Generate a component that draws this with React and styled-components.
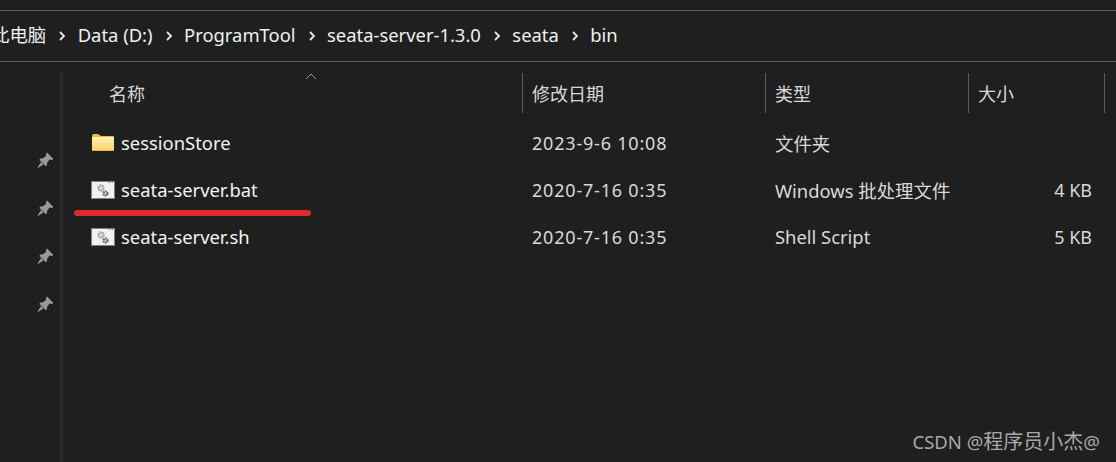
import React from "react";
import styled, { createGlobalStyle } from "styled-components";

const FONT = `"Noto Sans", "Noto Sans CJK SC", sans-serif`;

const GlobalStyle = createGlobalStyle`
	html, body {
		margin: 0;
		padding: 0;
		background: #1f1f1f;
	}
`;

const crumbs = ["此电脑", "Data (D:)", "ProgramTool", "seata-server-1.3.0", "seata", "bin"];

const files = [
	{ name: "sessionStore", icon: "folder", date: "2023-9-6 10:08", type: "文件夹", size: "" },
	{ name: "seata-server.bat", icon: "script", date: "2020-7-16 0:35", type: "Windows 批处理文件", size: "4 KB" },
	{ name: "seata-server.sh", icon: "script", date: "2020-7-16 0:35", type: "Shell Script", size: "5 KB" },
];

const pins = [0, 1, 2, 3];

const FolderIcon = () => (
	<FolderSvg width="22" height="17" viewBox="0 0 22 17">
		<defs>
			<linearGradient id="folderFill" x1="0" y1="0" x2="0" y2="1">
				<stop offset="0" stopColor="#fff0b8" />
				<stop offset="1" stopColor="#fbd568" />
			</linearGradient>
		</defs>
		<path d="M0 2 Q0 0 2 0 H6 L9 2 H0 Z" fill="#eeb73f" />
		<rect x="0" y="2" width="22" height="15" rx="1" fill="#eeb73f" />
		<rect x="0" y="3" width="22" height="13" fill="url(#folderFill)" />
	</FolderSvg>
);

const ScriptIcon = () => (
	<svg width="24" height="18" viewBox="0 0 24 18">
		<rect x="0.500" y="0.500" width="23" height="17" fill="#f2f2f2" stroke="#808080" />
		<rect x="17" y="1" width="6" height="1" fill="#8a8a8a" />
		<rect x="18" y="1" width="1" height="1" fill="#f2f2f2" />
		<rect x="20" y="1" width="1" height="1" fill="#f2f2f2" />
		<rect x="22" y="1" width="1" height="1" fill="#f2f2f2" />
		<circle cx="10" cy="7" r="2.400" fill="none" stroke="#a4a4a4" strokeWidth="2.600" strokeDasharray="1.700 0.500" />
		<circle cx="14.500" cy="12.500" r="2" fill="none" stroke="#666666" strokeWidth="2.200" strokeDasharray="1.500 0.500" />
	</svg>
);

const PinIcon = () => (
	<svg width="17" height="17" viewBox="0 0 17 17">
		<path d="M10 0.500 L16.500 7 L14.500 8 L12.500 7.500 L10 11 L10 13.500 L8.500 14 L2.500 8 L3 6.500 L5.500 6.500 L9 4 L9 2 Z" fill="#939aa2" />
		<path d="M4 10 L0 16.500 L6.500 12.500 Z" fill="#939aa2" />
	</svg>
);

export default function App() {
	return (
		<>
			<GlobalStyle />
			<Window>
				<TopStrip />
				<AddressBar>
					{crumbs.map((crumb, i) => (
						<React.Fragment key={crumb}>
							{i > 0 && (
								<Chevron viewBox="0 0 8 12">
									<path d="M2 2 L6 6 L2 10" />
								</Chevron>
							)}
							<Crumb>{crumb}</Crumb>
						</React.Fragment>
					))}
				</AddressBar>
				<Body>
					<PinPane>
						{pins.map(pin => (
							<PinIcon key={pin} />
						))}
					</PinPane>
					<Splitter />
					<ListPane>
						<HeaderRow>
							<HeaderCell $first>
								名称
								<SortCaret viewBox="0 0 12 7">
									<path d="M1 6 L6 1 L11 6" />
								</SortCaret>
							</HeaderCell>
							<HeaderCell>修改日期</HeaderCell>
							<HeaderCell>类型</HeaderCell>
							<HeaderCell>大小</HeaderCell>
						</HeaderRow>
						{files.map(file => (
							<FileRow key={file.name}>
								<NameCell>
									<IconSlot>{file.icon === "folder" ? <FolderIcon /> : <ScriptIcon />}</IconSlot>
									{file.name}
								</NameCell>
								<DateCell>{file.date}</DateCell>
								<Cell>{file.type}</Cell>
								<SizeCell>{file.size}</SizeCell>
							</FileRow>
						))}
						<RedMark />
					</ListPane>
				</Body>
				<Watermark>
					CSDN @<WatermarkCjk>程序员小杰</WatermarkCjk>@
				</Watermark>
			</Window>
		</>
	);
}

const Window = styled.div`
	position: relative;
	width: 1116px;
	height: 462px;
	overflow: hidden;
	background: #1f1f1f;
	color: #e6e6e6;
	font-family: ${FONT};
	font-size: 18.4px;
	display: flex;
	flex-direction: column;
`;

const TopStrip = styled.div`
	height: 10px;
	flex: none;
`;

const AddressBar = styled.div`
	height: 50px;
	flex: none;
	display: flex;
	align-items: center;
	border-top: 1px solid #5c5c5c;
	border-bottom: 1px solid #5c5c5c;
	margin-left: -9px;
	color: #f0f0f0;
`;

const Crumb = styled.span`
	white-space: nowrap;
	margin-top: -4px;
`;

const Chevron = styled.svg`
	width: 8px;
	height: 12px;
	margin: 0 11.500px 0 12px;
	flex: none;

	path {
		fill: none;
		stroke: #e6e6e6;
		stroke-width: 1.800;
	}
`;

const Body = styled.div`
	flex: 1;
	display: flex;
	padding-top: 11px;
	min-height: 0;
`;

const PinPane = styled.div`
	width: 60px;
	flex: none;
	box-sizing: border-box;
	padding: 79px 0 0 37px;
	display: flex;
	flex-direction: column;
	gap: 31px;
`;

const Splitter = styled.div`
	width: 3px;
	flex: none;
	background: #2b2b2b;
`;

const ListPane = styled.div`
	position: relative;
	flex: 1;
`;

const COLUMNS = "460px 243px 203px 136px";

const HeaderRow = styled.div`
	display: grid;
	grid-template-columns: ${COLUMNS};
	height: 40px;
	margin-bottom: 6px;
`;

const HeaderCell = styled.div`
	position: relative;
	box-sizing: border-box;
	display: flex;
	align-items: center;
	padding-left: ${props => (props.$first ? "46px" : "9px")};
	border-right: 1px solid #5c5c5c;
	color: #d8d8d8;
	font-size: 18px;
`;

const SortCaret = styled.svg`
	position: absolute;
	left: 242px;
	top: 0;
	width: 12px;
	height: 7px;

	path {
		fill: none;
		stroke: #9a9a9a;
		stroke-width: 1;
	}
`;

const FileRow = styled.div`
	display: grid;
	grid-template-columns: ${COLUMNS};
	height: 47px;
	align-items: center;
`;

const Cell = styled.div`
	padding-left: 9px;
	white-space: nowrap;
	color: #d9d9d9;
`;

const DateCell = styled(Cell)`
	font-size: 18px;
	letter-spacing: 0.800px;
`;

const SizeCell = styled(Cell)`
	padding: 0 13px 0 0;
	font-size: 18px;
	text-align: right;
`;

const NameCell = styled.div`
	display: flex;
	align-items: center;
	white-space: nowrap;
	color: #f2f2f2;
`;

const IconSlot = styled.span`
	width: 24px;
	margin: 0 6px 0 28px;
	display: flex;
	flex: none;
`;

const FolderSvg = styled.svg`
	margin-left: 1px;
`;

const RedMark = styled.div`
	position: absolute;
	left: 11px;
	top: 137px;
	width: 237px;
	height: 6px;
	border-radius: 3px;
	background: #dd2a2a;
`;

const Watermark = styled.div`
	position: absolute;
	right: 16px;
	bottom: 7px;
	color: #a8a8a8;
	font-size: 18.500px;
	white-space: nowrap;
`;

const WatermarkCjk = styled.span`
	font-size: 20px;
`;
